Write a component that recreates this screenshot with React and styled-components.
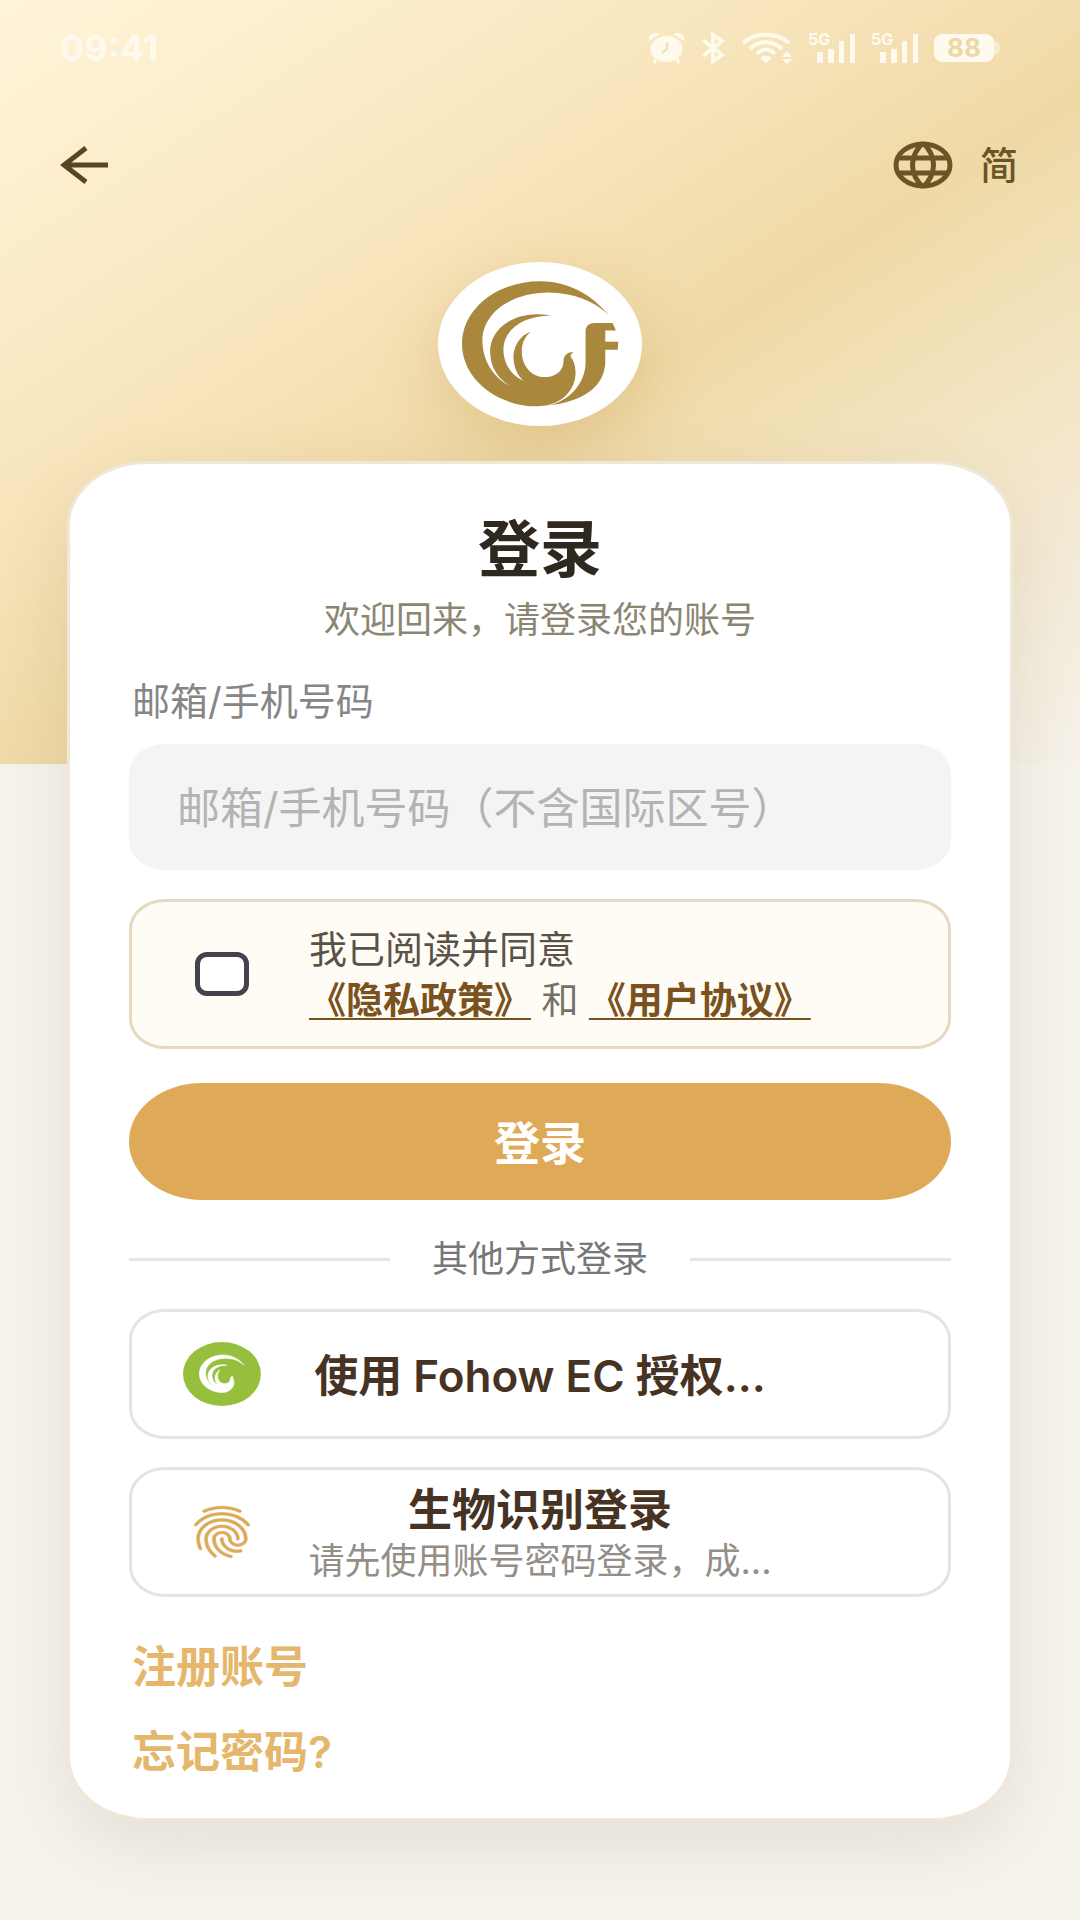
import React, { useState } from "react";
import styled, { createGlobalStyle } from "styled-components";
import { MdFingerprint } from "react-icons/md";

const GlobalStyle = createGlobalStyle`
  * {
    box-sizing: border-box;
  }
  body {
    margin: 0;
    background-color: #f6f3ec;
    font-family: Inter, "Noto Sans CJK SC", sans-serif;
  }
  button, input {
    font-family: inherit;
  }
`;

const Page = styled.div`
  min-height: 100vh;
  padding-bottom: 100px;
  background: linear-gradient(
      147deg,
      #fff4da 0%,
      #fcedca 18%,
      #f7e4bb 36%,
      #efd9a5 54%,
      #f3e4c2 72%,
      #f4ebd8 86%,
      #f6f2ea 100%
    )
    no-repeat top / 100% 764px;
`;

const StatusBar = styled.div`
  display: flex;
  justify-content: space-between;
  align-items: center;
  height: 96px;
  padding: 0 80px 0 60px;
  color: #fffaee;
`;

const Time = styled.span`
  font-size: 36px;
  line-height: 40px;
  font-weight: 700;
`;

const StatusIcons = styled.div`
  display: flex;
  align-items: center;
  gap: 16px;
`;

const SignalBox = styled.span`
  position: relative;
  display: block;
  width: 47px;
  height: 32px;
`;

const SignalType = styled.span`
  position: absolute;
  left: 0;
  top: 0;
  font-size: 16px;
  line-height: 14px;
  font-weight: 700;
`;

const Battery = styled.span`
  display: flex;
  align-items: center;
  &::after {
    content: "";
    width: 6px;
    height: 14px;
    border-radius: 0 6px 6px 0;
    background-color: #f8ebcf;
  }
`;

const BatteryLevel = styled.span`
  width: 60px;
  border-radius: 8px;
  background-color: #fffaee;
  color: #edd7a5;
  font-size: 26px;
  line-height: 28px;
  font-weight: 700;
  text-align: center;
`;

const NavBar = styled.nav`
  display: flex;
  justify-content: space-between;
  align-items: center;
  height: 138px;
  padding: 0 62px 0 60px;
`;

const NavButton = styled.button`
  display: flex;
  align-items: center;
  gap: 27px;
  padding: 0;
  border: none;
  background: none;
  color: ${({ $dark }) => ($dark ? "#5a4522" : "#6b5426")};
  font-size: 38px;
  line-height: 48px;
  font-weight: 500;
  cursor: pointer;
`;

const LogoWrap = styled.div`
  display: flex;
  justify-content: center;
  margin: 28px 0 35px;
`;

const LogoOval = styled.div`
  width: 204px;
  height: 164px;
  border-radius: 50%;
  background-color: white;
  box-shadow: 0 20px 64px rgba(180, 130, 50, 0.24);
`;

const Card = styled.main`
  position: relative;
  margin: 0 67px;
  padding: 48px 59px 36px;
  border: 3px solid #efe7d8;
  border-radius: 80px / 64px;
  background-color: white;
  box-shadow: 0 24px 72px rgba(90, 70, 30, 0.11);
`;

const Title = styled.h1`
  margin: 0;
  color: #2e281e;
  font-size: 62px;
  line-height: 76px;
  font-weight: 700;
  text-align: center;
`;

const Subtitle = styled.p`
  margin: 8px 0 33px;
  color: #8b8672;
  font-size: 36px;
  line-height: 48px;
  text-align: center;
`;

const Form = styled.form`
  display: flex;
  flex-direction: column;
`;

const Label = styled.label`
  margin: 0 0 19px 3px;
  color: #868686;
  font-size: 38px;
  line-height: 48px;
`;

const Input = styled.input`
  width: 100%;
  height: 126px;
  padding: 2px 48px 0;
  border: none;
  border-radius: 36px / 30px;
  background-color: #f4f4f4;
  color: #333;
  font-size: 43px;
  outline: none;
  &::placeholder {
    color: #b3b3b3;
  }
`;

const Agreement = styled.div`
  display: grid;
  grid-template-columns: 78px 1fr;
  align-items: center;
  column-gap: 48px;
  min-height: 150px;
  margin: 29px 0 34px;
  padding: 0 51px;
  border: 3px solid #e5d9c0;
  border-radius: 36px / 30px;
  background-color: #fffcf6;
`;

const Checkbox = styled.input`
  appearance: none;
  justify-self: center;
  width: 54px;
  height: 44px;
  margin: 0;
  border: 5px solid #46424d;
  border-radius: 12px;
  background-color: white;
  cursor: pointer;
  &:checked {
    background-color: #dfaa58;
  }
`;

const AgreementText = styled.div`
  padding-top: 2px;
  color: #595347;
  font-size: 38px;
  line-height: 51px;
`;

const AgreementLabel = styled.label`
  display: block;
`;

const Policies = styled.div`
  color: #777164;
  font-size: 37px;
`;

const PolicyLink = styled.a`
  color: #7a5220;
  font-weight: 700;
  text-decoration: underline;
  text-decoration-thickness: 2px;
  text-underline-offset: 4px;
`;

const SubmitBtn = styled.button`
  width: 100%;
  height: 117px;
  padding: 0 0 4px;
  border: none;
  border-radius: 73px / 58px;
  background-color: #dfaa58;
  color: white;
  font-size: 46px;
  font-weight: 700;
  cursor: pointer;
`;

const Divider = styled.div`
  display: flex;
  align-items: center;
  gap: 42px;
  margin: 35px 0 26px;
  color: #777;
  font-size: 36px;
  line-height: 48px;
  &::before,
  &::after {
    content: "";
    flex: 1;
    height: 3px;
    background-color: #e5e5e5;
  }
`;

const Providers = styled.div`
  display: flex;
  flex-direction: column;
  gap: 28px;
`;

const ProviderBtn = styled.button`
  display: grid;
  grid-template-columns: 78px 1fr 78px;
  align-items: center;
  justify-items: center;
  width: 100%;
  height: 130px;
  padding: 0 51px;
  border: 3px solid #e4e4e4;
  border-radius: 36px / 30px;
  background-color: white;
  cursor: pointer;
`;

const ProviderText = styled.span`
  display: flex;
  flex-direction: column;
  align-items: center;
  padding-top: 4px;
  white-space: nowrap;
`;

const ProviderName = styled.span`
  color: #463324;
  font-size: 44px;
  line-height: 54px;
  font-weight: 600;
`;

const ProviderHint = styled.span`
  color: #948e88;
  font-size: 36px;
  line-height: 48px;
`;

// the first path of the icon is its empty bounding box
const FingerprintIcon = styled(MdFingerprint).attrs({
  preserveAspectRatio: "none",
})`
  width: 74px;
  height: 62px;
  color: #dba958;
  stroke: none;
  path:last-child {
    stroke: currentColor;
    stroke-width: 0.2;
  }
`;

const Links = styled.div`
  display: flex;
  flex-direction: column;
  align-items: flex-start;
  gap: 25px;
  margin: 40px 0 0 3px;
`;

const TextLink = styled.a`
  color: #e4b76c;
  font-size: 44px;
  line-height: 60px;
  font-weight: 600;
  text-decoration: none;
`;

const BIRD =
  "M566 226C510 160 440 124 360 124C230 124 126 208 126 312C126 416 228 500 352 500C425 499 466 450 466 400C466 375 460 362 452 352C450 346 453 341 460 338C446 334 432 345 430 360C431 395 405 412 372 412C332 411 305 376 305 335C305 308 315 290 332 275C298 288 280 320 280 352C281 385 294 410 312 424C274 408 250 372 250 330C250 268 310 228 392 227C290 208 210 262 210 335C211 385 235 418 272 440C220 415 187 362 187 302C188 220 272 158 385 158C460 159 520 183 566 226Z";

const Logo = () => (
  <svg width="204" height="164" viewBox="54 66 611 493" preserveAspectRatio="none" fill="#a9873d">
    <path d={BIRD} />
    <path d="M385 497C465 488 550 455 555 370V330H592L594 306H555V272H587L577 249H525C505 249 496 258 496 275V370C494 430 450 482 385 497Z" />
  </svg>
);

const FohowIcon = () => (
  <svg width="78" height="64" viewBox="-35 -5 767 640" preserveAspectRatio="none">
    <ellipse cx="348" cy="315" rx="383" ry="320" fill="#95bf3d" />
    <path d={BIRD} fill="white" stroke="white" strokeWidth="6" />
  </svg>
);

const BackIcon = () => (
  <svg width="48" height="38" viewBox="0 0 48 38" fill="none" stroke="currentColor" strokeWidth="5">
    <path d="M26 2L4 19L26 36M4 19H48" />
  </svg>
);

const GlobeIcon = () => (
  <svg width="60" height="48" viewBox="0 0 60 48" fill="none" stroke="currentColor" strokeWidth="5">
    <ellipse cx="30" cy="24" rx="27" ry="21" />
    <path d="M5 17H55M5 32H55M30 2C16 15 16 33 30 46M30 2C44 15 44 33 30 46" />
  </svg>
);

const AlarmIcon = () => (
  <svg width="37" height="32" viewBox="0 0 37 32" fill="currentColor">
    <path d="M1 9C-1 3 6-1 12 2ZM36 9C38 3 31-1 25 2Z" />
    <ellipse cx="18.5" cy="17" rx="16" ry="13" />
    <path d="M8 27L6 31M29 27L31 31" stroke="currentColor" strokeWidth="3" />
    <path d="M19 10V17L14 21" fill="none" stroke="#f3e0b3" strokeWidth="2.4" />
  </svg>
);

const BluetoothIcon = () => (
  <svg width="24" height="32" viewBox="0 0 24 32" fill="none" stroke="currentColor" strokeWidth="3.6">
    <path d="M2 8L21 23L12 29V3L21 9L2 24" />
  </svg>
);

const WifiIcon = () => (
  <svg width="51" height="32" viewBox="0 0 51 32" fill="none" stroke="currentColor" strokeWidth="4">
    <path d="M2 11C14 0 36 0 48 11M9 17C18 8 32 8 41 17M16 22C21 16 29 16 34 22" />
    <path d="M25 31L19 26C22 23 28 23 31 26ZM41 25L46 19L51 25ZM41 27H51L46 32Z" fill="currentColor" stroke="none" />
  </svg>
);

const Signal = () => (
  <SignalBox>
    <SignalType>5G</SignalType>
    <svg width="47" height="32" viewBox="0 0 47 32" fill="currentColor">
      <rect x="9" y="20" width="6" height="11" rx="1" />
      <rect x="20" y="17" width="6" height="14" rx="1" />
      <rect x="31" y="9" width="5" height="22" rx="1" />
      <rect x="42" y="2" width="5" height="29" rx="1" />
    </svg>
  </SignalBox>
);

const App = () => {
  const [account, setAccount] = useState("");
  const [agreed, setAgreed] = useState(false);

  const handleSubmit = (event) => {
    event.preventDefault();
  };

  return (
    <>
      <GlobalStyle />
      <Page>
        <StatusBar>
          <Time>09:41</Time>
          <StatusIcons>
            <AlarmIcon />
            <BluetoothIcon />
            <WifiIcon />
            <Signal />
            <Signal />
            <Battery>
              <BatteryLevel>88</BatteryLevel>
            </Battery>
          </StatusIcons>
        </StatusBar>
        <NavBar>
          <NavButton type="button" aria-label="返回" $dark>
            <BackIcon />
          </NavButton>
          <NavButton type="button">
            <GlobeIcon />
            简
          </NavButton>
        </NavBar>
        <LogoWrap>
          <LogoOval>
            <Logo />
          </LogoOval>
        </LogoWrap>
        <Card>
          <Title>登录</Title>
          <Subtitle>欢迎回来，请登录您的账号</Subtitle>
          <Form onSubmit={handleSubmit}>
            <Label htmlFor="account">邮箱/手机号码</Label>
            <Input
              id="account"
              name="account"
              type="text"
              placeholder="邮箱/手机号码（不含国际区号）"
              value={account}
              onChange={(event) => setAccount(event.target.value)}
            />
            <Agreement>
              <Checkbox
                id="agree"
                type="checkbox"
                checked={agreed}
                onChange={(event) => setAgreed(event.target.checked)}
              />
              <AgreementText>
                <AgreementLabel htmlFor="agree">我已阅读并同意</AgreementLabel>
                <Policies>
                  <PolicyLink href="#privacy">《隐私政策》</PolicyLink> 和{" "}
                  <PolicyLink href="#terms">《用户协议》</PolicyLink>
                </Policies>
              </AgreementText>
            </Agreement>
            <SubmitBtn>登录</SubmitBtn>
          </Form>
          <Divider>其他方式登录</Divider>
          <Providers>
            <ProviderBtn type="button">
              <FohowIcon />
              <ProviderText>
                <ProviderName>使用 Fohow EC 授权...</ProviderName>
              </ProviderText>
            </ProviderBtn>
            <ProviderBtn type="button">
              <FingerprintIcon />
              <ProviderText>
                <ProviderName>生物识别登录</ProviderName>
                <ProviderHint>请先使用账号密码登录，成...</ProviderHint>
              </ProviderText>
            </ProviderBtn>
          </Providers>
          <Links>
            <TextLink href="#register">注册账号</TextLink>
            <TextLink href="#forgot">忘记密码?</TextLink>
          </Links>
        </Card>
      </Page>
    </>
  );
};

export default App;
